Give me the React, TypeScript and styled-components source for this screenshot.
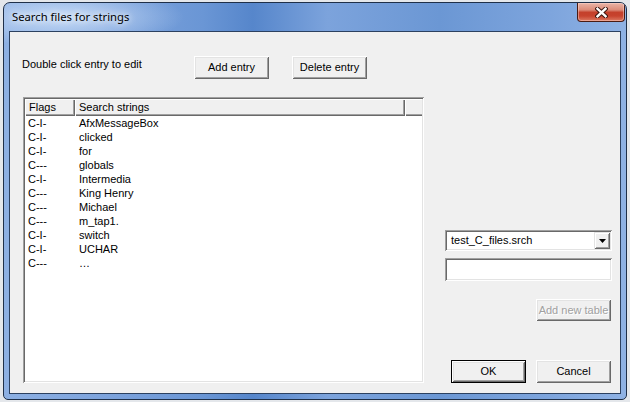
import React from "react";
import styled, { createGlobalStyle } from "styled-components";

const GlobalStyle = createGlobalStyle`
  html, body { margin: 0; padding: 0; background: #e4e7eb; }
  body {
    width: 630px; height: 402px; overflow: hidden;
    font-family: "Liberation Sans", Arial, sans-serif;
    font-size: 11px; color: #000;
  }
  #root { width: 630px; height: 402px; }
`;

const Window = styled.div`
  box-sizing: border-box;
  margin: 2px 0 0 3px;
  width: 624px;
  height: 398px;
  border: 1px solid #1f3049;
  border-radius: 7px 7px 5px 5px;
  padding: 0 5px 5px;
  display: flex;
  flex-direction: column;
  overflow: hidden;
  background:
    radial-gradient(ellipse 120px 30px at 60px 14px, rgba(210, 228, 250, 0.85), rgba(210, 228, 250, 0) 100%),
    linear-gradient(90deg, #8db0e3 0%, #7ba2dc 18%, #6a96d5 32%, #5686cb 40%, #7ca3dc 52%, #6b97d4 70%, #7ea5dd 88%, #8fb2e4 100%);
`;

const TitleBar = styled.div`
  height: 28px;
  display: flex;
  justify-content: space-between;
  align-items: flex-start;
  margin-right: -4px;
`;

const Title = styled.div`
  margin: 6px 0 0 3px;
  font-family: "Noto Sans", "Open Sans", sans-serif;
  font-size: 11.25px;
  line-height: 16px;
  color: #000;
  text-shadow: 0 0 6px rgba(255, 255, 255, 0.95), 0 0 10px rgba(255, 255, 255, 0.8);
`;

const CloseButton = styled.div`
  box-sizing: border-box;
  width: 48px;
  height: 19px;
  border: 1px solid #4a1b13;
  border-top: none;
  border-radius: 0 0 4px 4px;
  display: flex;
  align-items: center;
  justify-content: center;
  background: linear-gradient(180deg, #e9b4a7 0%, #dc8c7a 38%, #c4402b 52%, #c7432e 72%, #dc7a63 100%);
  box-shadow: inset 0 0 0 1px rgba(255, 220, 210, 0.45);
`;

const Client = styled.div`
  flex: 1;
  border: 1px solid #2c4160;
  background: #f0f0f0;
  display: flex;
  flex-direction: column;
  padding: 24px 0 10px;
`;

const TopRow = styled.div`
  display: flex;
  height: 23px;
  padding-left: 12px;
`;

const Hint = styled.div`
  width: 172px;
  margin-top: 2px;
  line-height: 13px;
`;

const Button = styled.div<{ $default?: boolean; $disabled?: boolean; $w?: number; $h?: number; $ml?: number }>`
  box-sizing: border-box;
  width: ${(p) => p.$w ?? 75}px;
  height: ${(p) => p.$h ?? 23}px;
  margin-left: ${(p) => p.$ml ?? 0}px;
  display: flex;
  align-items: center;
  justify-content: center;
  background: #f0f0f0;
  border: ${(p) => (p.$default ? "1px solid #000" : "none")};
  box-shadow: inset 1px 1px #ffffff, inset -1px -1px #696969, inset 2px 2px #e3e3e3, inset -2px -2px #a0a0a0;
  color: ${(p) => (p.$disabled ? "#a0a0a0" : "#000")};
  text-shadow: ${(p) => (p.$disabled ? "1px 1px 0 #ffffff" : "none")};
  line-height: 13px;
`;

const MainRow = styled.div`
  display: flex;
  margin-top: 18px;
  padding-left: 13px;
`;

const ListView = styled.div`
  box-sizing: border-box;
  width: 401px;
  height: 286px;
  padding: 2px;
  background: #fff;
  box-shadow: inset 1px 1px #a0a0a0, inset -1px -1px #ffffff, inset 2px 2px #696969, inset -2px -2px #e3e3e3;
`;

const HeaderRow = styled.div`
  display: flex;
  height: 17px;
`;

const HeaderCell = styled.div<{ $w?: number }>`
  box-sizing: border-box;
  width: ${(p) => p.$w}px;
  height: 17px;
  padding-left: 4px;
  line-height: 16px;
  background: #f0f0f0;
  box-shadow: inset 1px 1px #ffffff, inset -1px -1px #696969, inset -2px -2px #a0a0a0;
`;

const HeaderFiller = styled.div`
  flex: 1;
  height: 17px;
  background: #f0f0f0;
  box-shadow: inset 1px 1px #ffffff, inset 0 -1px #696969, inset 0 -2px #a0a0a0;
`;

const Row = styled.div`
  display: flex;
  height: 14px;
  line-height: 14px;
`;

const FlagCell = styled.div`
  width: 50px;
  padding-left: 3px;
  box-sizing: border-box;
`;

const StringCell = styled.div`
  padding-left: 4px;
`;

const SidePanel = styled.div`
  margin-left: 21px;
  width: 167px;
  display: flex;
  flex-direction: column;
`;

const Combo = styled.div`
  box-sizing: border-box;
  height: 21px;
  margin-top: 133px;
  padding: 2px;
  display: flex;
  background: #fff;
  box-shadow: inset 1px 1px #a0a0a0, inset -1px -1px #ffffff, inset 2px 2px #696969, inset -2px -2px #e3e3e3;
`;

const ComboText = styled.div`
  flex: 1;
  padding-left: 4px;
  line-height: 17px;
`;

const DropButton = styled.div`
  box-sizing: border-box;
  width: 16px;
  height: 17px;
  display: flex;
  align-items: center;
  justify-content: center;
  background: #f0f0f0;
  box-shadow: inset 1px 1px #e3e3e3, inset -1px -1px #696969, inset 2px 2px #ffffff, inset -2px -2px #a0a0a0;
`;

const Edit = styled.div`
  box-sizing: border-box;
  height: 23px;
  margin-top: 7px;
  background: #fff;
  box-shadow: inset 1px 1px #a0a0a0, inset -1px -1px #ffffff, inset 2px 2px #696969, inset -2px -2px #e3e3e3;
`;

const RightAligned = styled.div<{ $mt: number }>`
  display: flex;
  justify-content: flex-end;
  gap: 10px;
  margin-top: ${(p) => p.$mt}px;
  margin-right: 1px;
`;

const entries: [string, string][] = [
  ["C-I-", "AfxMessageBox"],
  ["C-I-", "clicked"],
  ["C-I-", "for"],
  ["C---", "globals"],
  ["C-I-", "Intermedia"],
  ["C---", "King Henry"],
  ["C---", "Michael"],
  ["C---", "m_tap1."],
  ["C-I-", "switch"],
  ["C-I-", "UCHAR"],
  ["C---", "\u2026"],
];

export default function App() {
  return (
    <>
      <GlobalStyle />
      <Window>
        <TitleBar>
          <Title>Search files for strings</Title>
          <CloseButton>
            <svg width="13" height="11" viewBox="0 0 13 11">
              <path d="M2.5 1.8 L10.5 9.2 M10.5 1.8 L2.5 9.2" stroke="#3b1610" strokeWidth="4.4" strokeLinecap="square" fill="none" />
              <path d="M2.5 1.8 L10.5 9.2 M10.5 1.8 L2.5 9.2" stroke="#ffffff" strokeWidth="2.4" strokeLinecap="square" fill="none" />
            </svg>
          </CloseButton>
        </TitleBar>
        <Client>
          <TopRow>
            <Hint>Double click entry to edit</Hint>
            <Button>Add entry</Button>
            <Button $ml={23}>Delete entry</Button>
          </TopRow>
          <MainRow>
            <ListView>
              <HeaderRow>
                <HeaderCell $w={50}>Flags</HeaderCell>
                <HeaderCell $w={330}>Search strings</HeaderCell>
                <HeaderFiller />
              </HeaderRow>
              {entries.map(([f, s], i) => (
                <Row key={i}>
                  <FlagCell>{f}</FlagCell>
                  <StringCell>{s}</StringCell>
                </Row>
              ))}
            </ListView>
            <SidePanel>
              <Combo>
                <ComboText>test_C_files.srch</ComboText>
                <DropButton>
                  <svg width="7" height="4" viewBox="0 0 7 4">
                    <polygon points="0,0 7,0 3.5,4" fill="#000" />
                  </svg>
                </DropButton>
              </Combo>
              <Edit />
              <RightAligned $mt={18}>
                <Button $disabled $h={22}>Add new table</Button>
              </RightAligned>
              <RightAligned $mt={39}>
                <Button $default>OK</Button>
                <Button>Cancel</Button>
              </RightAligned>
            </SidePanel>
          </MainRow>
        </Client>
      </Window>
    </>
  );
}
